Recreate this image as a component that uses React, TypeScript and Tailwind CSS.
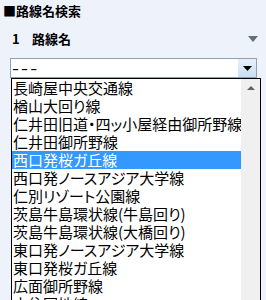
const routes = [
  '長崎屋中央交通線',
  '楢山大回り線',
  '仁井田旧道・四ッ小屋経由御所野線',
  '仁井田御所野線',
  '西口発桜ガ丘線',
  '西口発ノースアジア大学線',
  '仁別リゾート公園線',
  '茨島牛島環状線(牛島回り)',
  '茨島牛島環状線(大橋回り)',
  '東口発ノースアジア大学線',
  '東口発桜ガ丘線',
  '広面御所野線',
  '大住団地線',
]

const selected = 4

export default function App() {
  return (
    <div
      className="w-[266px] h-[300px] overflow-hidden bg-[#eef2fb] text-black"
      style={{ fontFamily: '"Noto Sans CJK JP", "Liberation Sans", sans-serif' }}
    >
      <div className="h-[24px] pl-[3px] pt-[1px] text-[13px] font-bold leading-[20px]">■路線名検索</div>

      <div className="flex items-center h-[30px] pl-[12px] pr-[8px] text-[13px] font-bold">
        <span className="w-[20px]">1</span>
        <span>路線名</span>
        <svg className="ml-auto" width="10" height="6" viewBox="0 0 10 6">
          <path d="M0 0 L10 0 L5 6 Z" fill="#5f6f7f" />
        </svg>
      </div>

      <div className="ml-[10px] mt-[4px] flex w-[247px] h-[20px] border border-[#8ea2b6] bg-white">
        <div className="flex-1 pl-[1px] text-[15px] leading-[18px]">
          <span className="inline-block origin-left scale-x-[1.4] tracking-[1.5px] [font-family:'Liberation_Sans',sans-serif]">---</span>
        </div>
        <div className="flex w-[18px] items-center justify-center bg-gradient-to-b from-[#e6f0fa] to-[#c9dff3]">
          <svg width="9" height="5" viewBox="0 0 9 5">
            <path d="M0 0 L9 0 L4.5 5 Z" fill="#000" />
          </svg>
        </div>
      </div>

      <div className="ml-[11px] flex w-[250px] h-[230px] border-l border-t border-r border-black bg-white">
        <div className="w-[229px] overflow-hidden">
          {routes.map((r, i) => (
            <div
              key={r}
              className={
                'h-[18px] whitespace-nowrap pl-[1px] text-[15px] leading-[18px] [font-feature-settings:"palt"] ' +
                (i === selected ? 'bg-[#3399ff] text-white' : '')
              }
            >
              {r}
            </div>
          ))}
        </div>
        <div className="flex w-[19px] justify-center bg-[#f0f0f0] pt-[7px]">
          <svg width="8" height="4" viewBox="0 0 8 4">
            <path d="M0 4 L8 4 L4 0 Z" fill="#606060" />
          </svg>
        </div>
      </div>
    </div>
  )
}
